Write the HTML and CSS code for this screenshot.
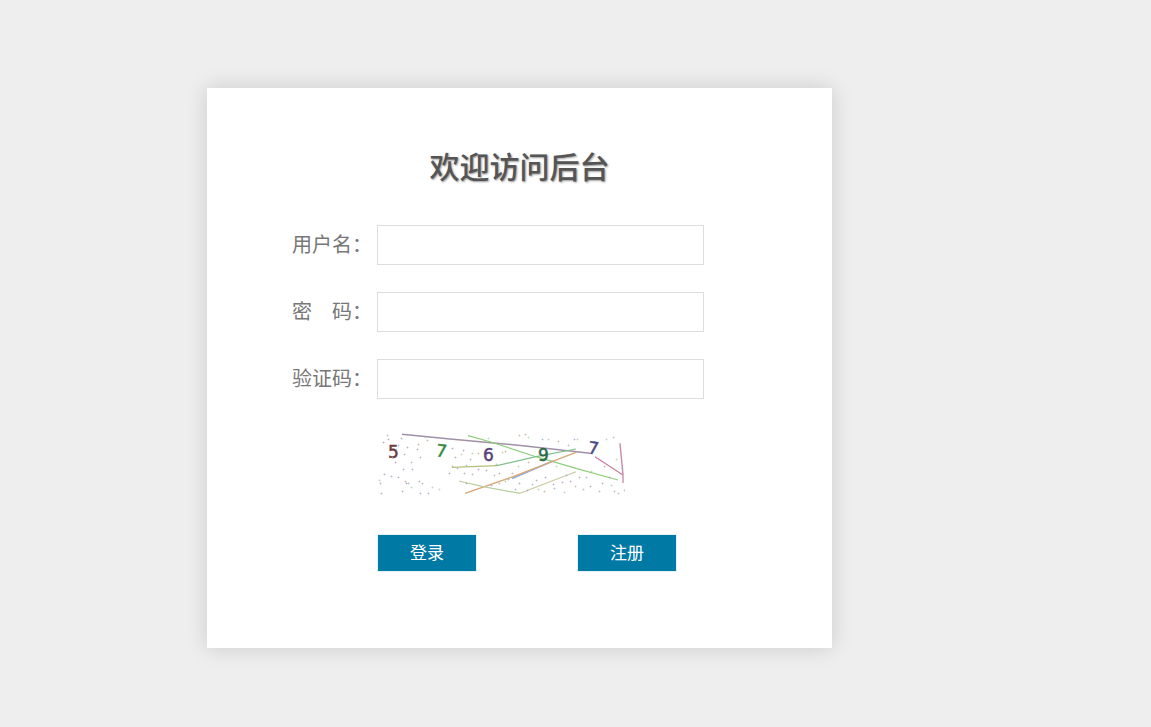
FILE: index.html
```html
<!DOCTYPE html>
<html lang="zh-CN">
<head>
    <meta charset="UTF-8">
    <title>欢迎访问后台</title>
    <link rel="stylesheet" href="styles.css">
</head>
<body>
    <div class="login-box">
        <h1 class="login-title">欢迎访问后台</h1>
        <form class="login-form">
            <div class="form-row">
                <label class="form-label" for="username">用户名：</label>
                <input class="form-input" type="text" id="username">
            </div>
            <div class="form-row">
                <label class="form-label" for="password">密&#12288;码：</label>
                <input class="form-input" type="password" id="password">
            </div>
            <div class="form-row">
                <label class="form-label" for="code">验证码：</label>
                <input class="form-input" type="text" id="code">
            </div>
            <div class="captcha-row">
                <svg class="captcha" width="247" height="62" viewBox="0 0 247 62">
                    <g fill="none" stroke-width="1">
                        <polyline stroke="#a090a8" stroke-width="1.4" points="24,1.3 72,6 145,12.7 212,20.3"/>
                        <polyline stroke="#8fcf7a" stroke-width="1.2" points="90,2.7 112,8.7 158,23.7 198,35.3 240,47"/>
                        <polyline stroke="#b3c07a" stroke-width="1.2" points="74,34.3 119,32.7"/>
                        <polyline stroke="#7fc08a" stroke-width="1.2" points="119,32.7 158,23.7 198,16"/>
                        <polyline stroke="#8fa8d8" stroke-width="1.4" points="134,45.5 175,28"/>
                        <polyline stroke="#d8a878" stroke-width="1.4" points="87,60.3 135,43.7 198,19.3"/>
                        <polyline stroke="#b8cfa0" stroke-width="1.2" points="81,48 105,53.7 142,60.3"/>
                        <polyline stroke="#ccc8a0" stroke-width="1.2" points="142,60.3 198,38.7"/>
                        <polyline stroke="#c87a9c" stroke-width="1.2" points="217,23.7 245,42 245,50"/>
                        <polyline stroke="#c88aa4" stroke-width="1.4" points="242,10.3 245,42"/>
                    </g>
                    <g class="captcha-digits">
                        <text x="10" y="25" fill="#6b3a3a" stroke="#6b3a3a">5</text>
                        <text x="58" y="24" fill="#2f8a3a" stroke="#2f8a3a" transform="rotate(8 64 18)">7</text>
                        <text x="105" y="28" fill="#5a3f7a" stroke="#5a3f7a">6</text>
                        <text x="160" y="28" fill="#2a6a48" stroke="#2a6a48">9</text>
                        <text x="210" y="21" fill="#4a4a80" stroke="#4a4a80" transform="rotate(8 215 15)">7</text>
                    </g>
                    <g class="captcha-dots">
                        <path stroke="#a89ab8" d="M5 9h1v1h-1zM10 6h1v1h-1zM23 5h1v1h-1zM29 14h1v1h-1zM39 16h1v1h-1zM14 24h1v1h-1zM17 29h1v1h-1zM25 36h1v1h-1zM34 36h1v1h-1zM6 41h1v1h-1zM13 43h1v1h-1zM20 44h1v1h-1zM28 50h1v1h-1zM41 48h1v1h-1zM2 50h1v1h-1zM24 58h1v1h-1zM42 60h1v1h-1zM50 60h1v1h-1zM3 60h1v1h-1zM74 15h1v1h-1zM77 24h1v1h-1zM85 17h1v1h-1zM92 26h1v1h-1zM71 40h1v1h-1zM86 40h1v1h-1zM88 50h1v1h-1zM100 36h1v1h-1zM108 37h1v1h-1zM121 40h1v1h-1zM130 46h1v1h-1zM141 50h1v1h-1zM149 57h1v1h-1zM158 47h1v1h-1zM167 44h1v1h-1zM175 51h1v1h-1zM184 49h1v1h-1zM192 48h1v1h-1zM201 44h1v1h-1zM212 53h1v1h-1zM224 50h1v1h-1zM231 44h1v1h-1z"/>
                        <path stroke="#c8a890" d="M9 2h1v1h-1zM40 11h1v1h-1zM33 29h1v1h-1zM49 7h1v1h-1zM27 48h1v1h-1zM74 33h1v1h-1zM84 7h1v1h-1zM118 31h1v1h-1zM141 2h1v1h-1zM147 1h1v1h-1zM116 42h1v1h-1zM121 50h1v1h-1zM134 40h1v1h-1zM150 29h1v1h-1zM166 58h1v1h-1zM180 8h1v1h-1zM190 12h1v1h-1zM197 53h1v1h-1zM205 56h1v1h-1zM226 33h1v1h-1zM235 4h1v1h-1zM240 60h1v1h-1zM246 57h1v1h-1zM100 20h1v1h-1zM127 18h1v1h-1z"/>
                        <path stroke="#a8d0a0" d="M1 47h1v1h-1zM18 16h1v1h-1zM47 4h1v1h-1zM54 54h1v1h-1zM33 54h1v1h-1zM61 56h1v1h-1zM83 21h1v1h-1zM94 20h1v1h-1zM124 19h1v1h-1zM110 5h1v1h-1zM127 48h1v1h-1zM150 4h1v1h-1zM170 6h1v1h-1zM178 33h1v1h-1zM186 59h1v1h-1zM199 6h1v1h-1zM213 38h1v1h-1zM228 6h1v1h-1zM233 52h1v1h-1zM238 26h1v1h-1zM160 56h1v1h-1zM140 33h1v1h-1z"/>
                        <path stroke="#90b0d8" d="M20 12h1v1h-1zM26 21h1v1h-1zM42 24h1v1h-1zM30 50h1v1h-1zM44 50h1v1h-1zM79 35h1v1h-1zM88 32h1v1h-1zM108 22h1v1h-1zM94 41h1v1h-1zM113 52h1v1h-1zM137 56h1v1h-1zM154 51h1v1h-1zM164 6h1v1h-1zM176 55h1v1h-1zM188 42h1v1h-1zM196 6h1v1h-1zM208 44h1v1h-1zM221 58h1v1h-1zM236 58h1v1h-1zM244 35h1v1h-1z"/>
                    </g>
                </svg>
            </div>
            <div class="button-row">
                <button class="login-btn" type="button">登录</button>
                <button class="login-btn" type="button">注册</button>
            </div>
        </form>
    </div>
</body>
</html>
```

FILE: styles.css
```css
html, body {
    margin: 0;
    padding: 0;
}

body {
    min-height: 727px;
    box-sizing: border-box;
    padding: 88px 0 0 207px;
    background: #eee;
    font-family: "Noto Sans CJK SC", "Liberation Sans", sans-serif;
}

.login-box {
    width: 625px;
    height: 560px;
    box-sizing: border-box;
    padding-top: 57px;
    background: #fff;
    box-shadow: 0 0 20px rgba(0, 0, 0, 0.15);
}

.login-title {
    margin: 0;
    height: 40px;
    line-height: 40px;
    text-align: center;
    font-size: 30px;
    font-weight: 500;
    color: #555;
    text-shadow: 1px 1px 2px #999;
}

.login-form {
    margin-top: 40px;
    padding-left: 85px;
}

.form-row {
    display: flex;
    align-items: center;
    height: 40px;
    margin-bottom: 27px;
}

.form-label {
    width: 85px;
    margin-bottom: 2px;
    font-size: 20px;
    line-height: 38px;
    color: #777;
    white-space: nowrap;
}

.form-input {
    width: 327px;
    height: 40px;
    box-sizing: border-box;
    border: 1px solid #ddd;
    background: #fff;
    padding: 0 10px;
    outline: none;
}

.captcha-row {
    height: 62px;
    margin-top: 34px;
    padding-left: 86px;
}

.captcha {
    display: block;
}

.captcha-digits {
    font-family: "DejaVu Sans", sans-serif;
    font-size: 17px;
    stroke-width: 0.5;
}

.captcha-dots {
    fill: none;
    stroke-width: 0.6;
}

.button-row {
    display: flex;
    gap: 100px;
    margin-top: 39px;
    padding-left: 85px;
}

.login-btn {
    width: 100px;
    height: 38px;
    box-sizing: border-box;
    padding: 0 0 3px;
    border: 1px solid #e4f2f8;
    background: #0079a5;
    color: #fff;
    font-family: inherit;
    font-size: 17px;
}
```
